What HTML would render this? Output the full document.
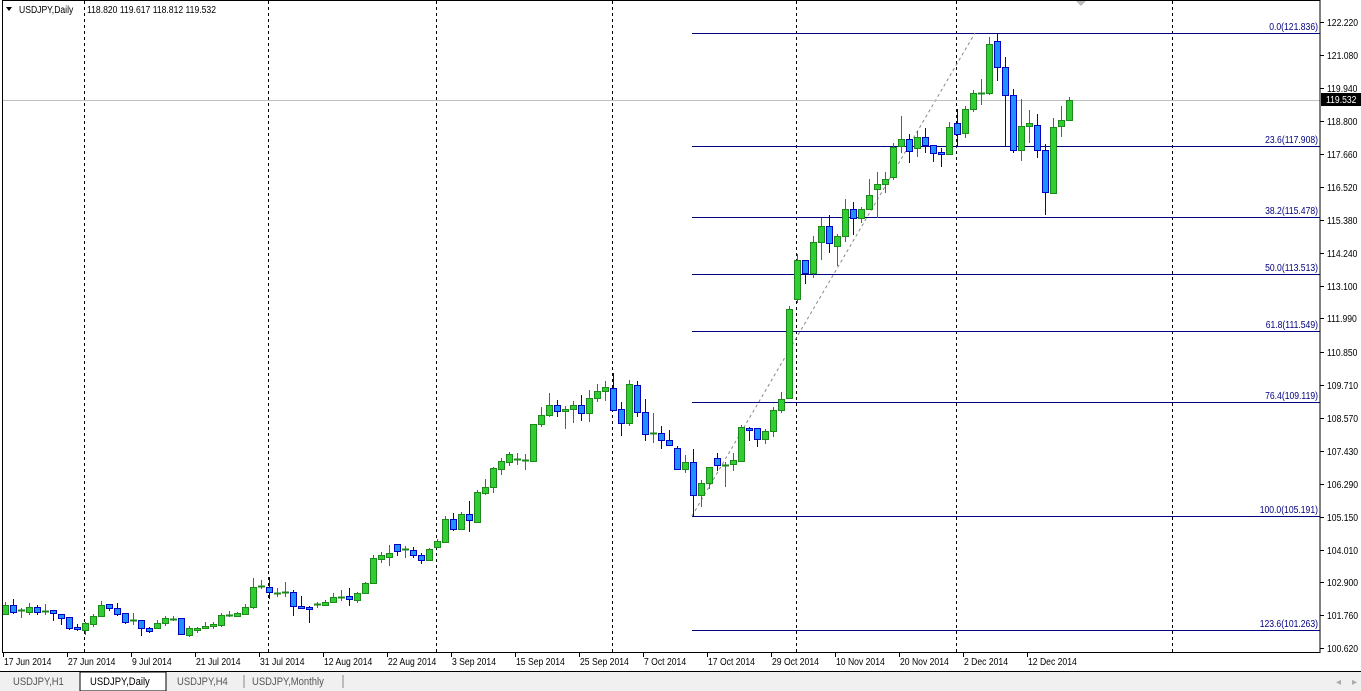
<!DOCTYPE html>
<html><head><meta charset="utf-8"><style>
html,body{margin:0;padding:0;background:#fff;width:1361px;height:691px;overflow:hidden}
svg{display:block}
text{font-family:"Liberation Sans",sans-serif;font-size:10px}
line{shape-rendering:crispEdges}
</style></head><body>
<svg id="s" width="1361" height="691" xmlns="http://www.w3.org/2000/svg">
<rect x="0" y="0" width="1361" height="691" fill="#fff"/>
<g id="grid"></g>
<g id="fib"></g>
<line x1="692" y1="516" x2="975" y2="33" stroke="#888" stroke-dasharray="3,3" style="shape-rendering:auto"/>
<line x1="3" y1="100.5" x2="1320" y2="100.5" stroke="#c0c0c0"/>
<g id="c"></g>
<rect x="2.5" y="0.5" width="1317.5" height="652" fill="none" stroke="#000"/>
<g id="ax"></g>
<g id="dt"></g>
<path d="M6 7 L12 7 L9 11 Z" fill="#000"/>
<text x="19" y="13">USDJPY,Daily</text>
<text x="87" y="13">118.820 119.617 118.812 119.532</text>
<path d="M1076 1 L1086 1 L1081 6 Z" fill="#bbb"/>
<rect x="1321" y="93" width="40" height="13" fill="#000"/>
<text x="1326" y="103" fill="#fff">119.532</text>
<rect x="0" y="671" width="1361" height="20" fill="#f0f0f0"/>
<line x1="0" y1="671.5" x2="1361" y2="671.5" stroke="#000"/>
<rect x="80" y="672" width="86" height="19" fill="#fff" stroke="#000"/>
<text x="13" y="685" fill="#555" style="font-size:11px">USDJPY,H1</text>
<text x="90" y="685" style="font-size:11px">USDJPY,Daily</text>
<text x="177" y="685" fill="#555" style="font-size:11px">USDJPY,H4</text>
<line x1="244" y1="675" x2="244" y2="688" stroke="#888"/>
<text x="252" y="685" fill="#555" style="font-size:11px">USDJPY,Monthly</text>
<line x1="343" y1="675" x2="343" y2="688" stroke="#888"/>
<text x="1336" y="685" fill="#aaa">◂</text><text x="1352" y="685" fill="#aaa">▸</text>
</svg>
<script>
var NS="http://www.w3.org/2000/svg";
function el(p,t,a,tx){var e=document.createElementNS(NS,t);for(var k in a)e.setAttribute(k,a[k]);if(tx)e.textContent=tx;document.getElementById(p).appendChild(e);return e;}
[84.5,268.5,436.5,612.5,796.5,956.5,1172.5].forEach(function(x){el("grid","line",{x1:x,y1:1,x2:x,y2:652,stroke:"#000","stroke-dasharray":"3,3"});});
var fibs=[[33,"0.0(121.836)"],[146,"23.6(117.908)"],[217,"38.2(115.478)"],[274,"50.0(113.513)"],[331,"61.8(111.549)"],[402,"76.4(109.119)"],[516,"100.0(105.191)"],[630,"123.6(101.263)"]];
fibs.forEach(function(f){el("fib","line",{x1:692,y1:f[0]+.5,x2:1320,y2:f[0]+.5,stroke:"#000080"});el("fib","text",{x:1318,y:f[0]-3,"text-anchor":"end",fill:"#000080"},f[1]);});
var ax=[[22,"122.220"],[55,"121.080"],[88,"119.940"],[121,"118.800"],[154,"117.660"],[187,"116.520"],[220,"115.380"],[253,"114.240"],[286,"113.100"],[318,"111.990"],[352,"110.850"],[385,"109.710"],[418,"108.570"],[451,"107.430"],[484,"106.290"],[517,"105.150"],[550,"104.010"],[582,"102.900"],[615,"101.760"],[648,"100.620"]];
ax.forEach(function(a){el("ax","line",{x1:1320,y1:a[0]+.5,x2:1324,y2:a[0]+.5,stroke:"#000"});el("ax","text",{x:1327,y:a[0]+4},a[1]);});
var ds=["17 Jun 2014","27 Jun 2014","9 Jul 2014","21 Jul 2014","31 Jul 2014","12 Aug 2014","22 Aug 2014","3 Sep 2014","15 Sep 2014","25 Sep 2014","7 Oct 2014","17 Oct 2014","29 Oct 2014","10 Nov 2014","20 Nov 2014","2 Dec 2014","12 Dec 2014"];
ds.forEach(function(d,i){var x=3+64*i;el("dt","line",{x1:x+.5,y1:652,x2:x+.5,y2:657,stroke:"#000"});el("dt","text",{x:x+1,y:665},d);});
var C=[[614,605,602,614],[605,612,599,614],[610,610,608,618],[612,607,603,615],[607,612,605,615],[611,611,604,615],[610,613,610,621],[614,618,614,625],[617,628,617,630],[627,629,624,631],
[630,623,622,635],[624,616,614,627],[616,605,601,616],[604,608,604,611],[608,614,603,616],[613,622,613,624],[621,620,613,625],[620,628,620,636],[628,631,627,633],[628,623,620,629],
[623,618,616,626],[619,619,616,621],[618,634,618,635],[635,628,626,637],[630,628,627,633],[628,626,622,629],[626,624,622,629],[625,615,613,627],[615,615,611,617],[616,613,612,617],
[614,607,604,615],[607,587,578,609],[586,586,580,589],[587,592,577,599],[593,593,588,597],[593,592,582,597],[592,606,590,616],[606,608,596,609],[607,609,606,623],[604,604,602,608],
[605,602,600,606],[602,597,593,603],[597,597,590,601],[596,599,588,606],[600,593,592,603],[593,583,582,594],[583,558,555,583],[559,555,552,563],[557,553,545,566],[544,551,544,556],
[549,549,546,558],[550,555,547,558],[555,560,553,564],[560,549,548,560],[547,541,539,547],[542,519,516,542],[519,529,513,531],[529,514,512,529],[514,520,501,532],[522,492,490,522],
[493,487,479,495],[487,468,467,493],[469,461,458,475],[462,454,452,466],[459,459,453,465],[460,460,454,470],[461,424,424,461],[424,415,407,427],[415,405,393,417],[405,411,400,417],
[411,409,406,429],[409,405,401,423],[405,413,395,421],[413,398,390,422],[398,391,384,402],[391,387,381,401],[388,410,373,410],[409,423,402,436],[423,384,380,426],[385,412,381,417],
[412,434,399,441],[433,433,413,443],[433,440,426,449],[440,445,430,445],[448,469,446,470],[469,462,455,473],[462,495,449,516],[495,483,480,507],[483,467,467,489],[458,465,453,471],
[465,465,462,487],[464,460,453,471],[461,427,425,461],[428,430,427,441],[428,439,428,447],[439,431,429,444],[431,410,407,437],[410,399,392,413],[398,309,306,398],[299,260,254,303],
[260,273,260,284],[273,242,236,278],[242,226,218,260],[226,243,215,253],[246,236,234,266],[236,209,199,242],[209,218,202,235],[218,209,207,223],[209,195,179,210],[189,184,172,218],
[184,179,172,193],[177,147,143,180],[146,139,116,153],[139,151,134,163],[148,137,131,157],[137,145,128,153],[145,153,145,162],[152,154,148,167],[154,127,122,154],[123,134,109,146],
[133,109,106,138],[109,93,90,112],[93,93,79,105],[93,44,37,95],[41,67,34,81],[67,95,57,146],[95,150,89,153],[150,126,99,161],[126,123,110,143],[125,150,114,158],
[150,192,144,215],[193,127,118,194],[126,120,106,137],[120,100,97,120]];
C.forEach(function(c,i){var x=5+8*i,o=c[0],cl=c[1],h=c[2],l=c[3];var bull=cl<=o;var col=bull?"#1b8a1b":"#0000c0",fill=bull?"#32cd32":"#1e90ff";
el("c","line",{x1:x+.5,y1:h,x2:x+.5,y2:l,stroke:col});
var t=Math.min(o,cl),b=Math.max(o,cl);
if(b-t<2){el("c","line",{x1:x-3,y1:t+.5,x2:x+4,y2:t+.5,stroke:col,"stroke-width":2});}
else el("c","rect",{x:x-2.5,y:t+.5,width:6,height:b-t,fill:fill,stroke:col});});
// narrow text to mimic Tahoma
Array.prototype.forEach.call(document.querySelectorAll("text"),function(t){if(t.textContent.length<3)return;var L=t.getComputedTextLength();t.setAttribute("textLength",(L*0.86).toFixed(1));t.setAttribute("lengthAdjust","spacingAndGlyphs");});
</script>
</body></html>
